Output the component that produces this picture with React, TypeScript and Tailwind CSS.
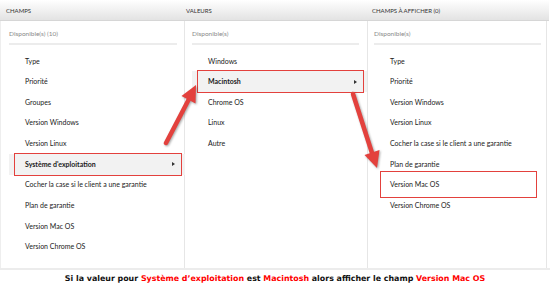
import React from "react";

type Col = {
  title: string;
  sub: string;
  items: string[];
  selected?: number;
  marked?: number;
  width: string;
  headPad: string;
  bodyPad: string;
};

const columns: Col[] = [
  {
    title: "Champs",
    sub: "Disponible(s) (10)",
    items: [
      "Type",
      "Priorité",
      "Groupes",
      "Version Windows",
      "Version Linux",
      "Système d'exploitation",
      "Cocher la case si le client a une garantie",
      "Plan de garantie",
      "Version Mac OS",
      "Version Chrome OS",
    ],
    selected: 5,
    width: "w-[184px]",
    headPad: "pl-[6px]",
    bodyPad: "pl-[8px] pr-[7px]",
  },
  {
    title: "Valeurs",
    sub: "Disponible(s)",
    items: ["Windows", "Macintosh", "Chrome OS", "Linux", "Autre"],
    selected: 1,
    width: "w-[183px]",
    headPad: "pl-[2px]",
    bodyPad: "pl-[7px] pr-[8px]",
  },
  {
    title: "Champs à afficher (0)",
    sub: "Disponible(s)",
    items: [
      "Type",
      "Priorité",
      "Version Windows",
      "Version Linux",
      "Cocher la case si le client a une garantie",
      "Plan de garantie",
      "Version Mac OS",
      "Version Chrome OS",
    ],
    marked: 6,
    width: "w-[179px]",
    headPad: "pl-[5px]",
    bodyPad: "pl-[6px] pr-[5px]",
  },
];

function Row({ label, selected, marked }: { label: string; selected?: boolean; marked?: boolean }) {
  return (
    <div
      className={`relative flex h-[20.67px] items-center pl-[16px] pr-[10px] text-[7px] leading-none text-[#1a1a1a] ${
        selected ? "-mr-[8px] bg-[#f2f2f2] font-bold" : ""
      }`}
    >
      <span className="flex-1">{label}</span>
      {selected && (
        <span className="h-0 w-0 border-y-[2px] border-l-[3px] border-y-transparent border-l-[#333]" />
      )}
      {selected && (
        <div className="pointer-events-none absolute -top-[1px] -bottom-[1px] left-[5px] right-[3px] border-[1.5px] border-[#e3413d]" />
      )}
      {marked && (
        <div className="pointer-events-none absolute -top-[4px] -bottom-[3px] left-[6px] right-[4px] border-[1.5px] border-[#e3413d]" />
      )}
    </div>
  );
}

export default function App() {
  return (
    <div className="relative h-[295px] w-[550px] overflow-hidden bg-white font-['Lato','Open_Sans',sans-serif]">
      <div className="flex h-[268px] flex-col">
        <div className="flex h-[21px] w-[549px] border-b border-[#d6d6d6] bg-gradient-to-b from-white to-[#e3e3e3]">
          {columns.map((c) => (
            <div
              key={c.title}
              className={`${c.width} ${c.headPad} flex items-center text-[6px] uppercase text-[#333]`}
            >
              {c.title}
            </div>
          ))}
        </div>
        <div className="flex flex-1 border-l border-[#eee]">
          {columns.map((c) => (
            <div key={c.title} className={`${c.width} ${c.bodyPad} border-r border-[#e6e6e6] pt-[8px]`}>
              <div className="text-[6.5px] leading-[10px] text-[#8a8a8a]">{c.sub}</div>
              <div className="mt-[4px] h-[2px] bg-[#ececec]" />
              <div className="mt-[5.7px] flex flex-col">
                {c.items.map((it, i) => (
                  <Row key={it} label={it} selected={c.selected === i} marked={c.marked === i} />
                ))}
              </div>
            </div>
          ))}
        </div>
      </div>
      <div className="border-t-2 border-[#ececec] pt-[4px] text-center font-['DejaVu_Sans',Verdana,sans-serif] text-[7.9px] font-bold leading-[10px] text-[#111]">
        Si la valeur pour <span className="text-[#ff0000]">Système d’exploitation</span> est{" "}
        <span className="text-[#ff0000]">Macintosh</span> alors afficher le champ{" "}
        <span className="text-[#ff0000]">Version Mac OS</span>
      </div>

      <svg
        className="pointer-events-none absolute inset-0 drop-shadow-[1px_1px_1px_rgba(0,0,0,0.35)]"
        width="550"
        height="295"
        viewBox="0 0 550 295"
      >
        <line x1="166" y1="143" x2="189" y2="99" stroke="#e3413d" strokeWidth="4.5" strokeLinecap="round" />
        <polygon points="196,85 195.5,103.5 181.5,96" fill="#e3413d" />
        <line x1="353" y1="94" x2="372" y2="153" stroke="#e3413d" strokeWidth="4.5" strokeLinecap="round" />
        <polygon points="377,168 379.5,150 364.5,155" fill="#e3413d" />
      </svg>
    </div>
  );
}
